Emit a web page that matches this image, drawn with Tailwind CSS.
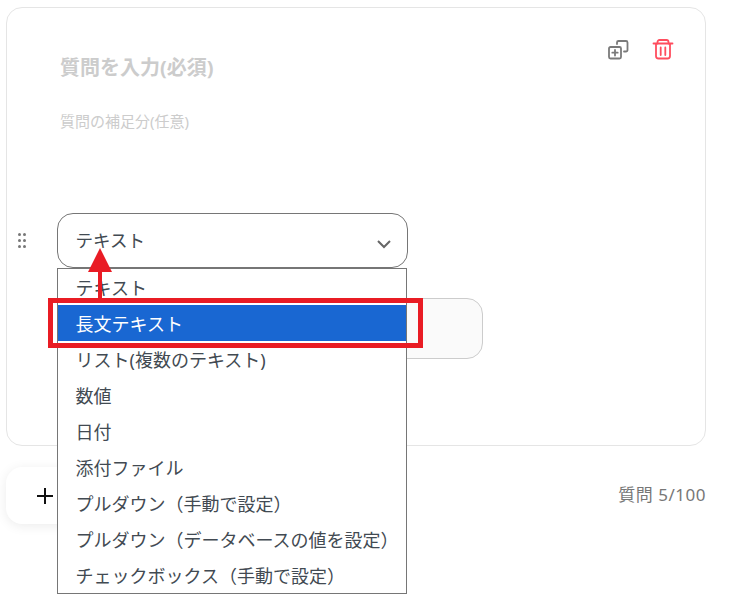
<!DOCTYPE html>
<html lang="ja">
<head>
    <meta charset="UTF-8">
    <title>質問フォーム</title>
    <script src="https://cdn.jsdelivr.net/npm/@tailwindcss/browser@4"></script>
</head>
<body class="relative h-[597px] overflow-hidden bg-white font-['Noto_Sans','Noto_Sans_CJK_JP',sans-serif]">
    <div class="pl-[6px] pt-[7px] w-[706px]">
        <!-- Question card -->
        <div class="relative h-[439px] rounded-2xl border border-[#e5e5e5] bg-white pl-[53px] pt-[45px]">
            <div class="absolute right-[31px] top-[31px] flex items-start gap-[23px]">
                <svg class="w-[22px] h-[22px]" viewBox="0 0 22 22" fill="none" stroke="#7a7a7a" stroke-width="1.800" stroke-linecap="round" stroke-linejoin="round">
                    <rect x="2" y="8" width="12" height="11.500" rx="1.500"/>
                    <path d="M10 5V3.500A1.500 1.500 0 0 1 11.500 2H19a1.500 1.500 0 0 1 1.500 1.500V11a1.500 1.500 0 0 1-1.500 1.500H17"/>
                    <path d="M8 11v5.500M5.300 13.700h5.400"/>
                </svg>
                <svg class="w-[22px] h-[22px]" viewBox="0 0 22 22" fill="none" stroke="#ff4d5e" stroke-width="1.800" stroke-linecap="round" stroke-linejoin="round">
                    <path d="M1.500 4.500h19"/>
                    <path d="M5.500 4.500V3a2 2 0 0 1 2-2h7a2 2 0 0 1 2 2v1.500"/>
                    <path d="M4 5v12a2.500 2.500 0 0 0 2.500 2.500h9A2.500 2.500 0 0 0 18 17V5"/>
                    <path d="M8.700 8.500V16M13.300 8.500V16"/>
                </svg>
            </div>
            <h2 class="text-[20px] leading-[30px] font-bold text-[#cccccc]">質問を入力(必須)</h2>
            <p class="mt-[27px] text-[15px] leading-[22px] text-[#cccccc]">質問の補足分(任意)</p>

            <!-- Type select row -->
            <div class="relative mt-[81px] -ml-[3px] w-[351px]">
                <div class="absolute -left-[39px] top-[20px] grid grid-cols-2 gap-x-[2px] gap-y-[3px]">
                    <span class="w-[3px] h-[3px] rounded-full bg-[#777777]"></span>
                    <span class="w-[3px] h-[3px] rounded-full bg-[#777777]"></span>
                    <span class="w-[3px] h-[3px] rounded-full bg-[#777777]"></span>
                    <span class="w-[3px] h-[3px] rounded-full bg-[#777777]"></span>
                    <span class="w-[3px] h-[3px] rounded-full bg-[#777777]"></span>
                    <span class="w-[3px] h-[3px] rounded-full bg-[#777777]"></span>
                </div>
                <div class="flex h-[55px] items-center justify-between rounded-2xl border border-[#767676] bg-white pl-[17.5px] pr-[15px]">
                    <span class="text-[17.5px] text-[#424a52]">テキスト</span>
                    <svg class="mt-[7px] w-[16px] h-[10px]" viewBox="0 0 16 10" fill="none" stroke="#666666" stroke-width="2"><path d="M2 2l6 6 6-6"/></svg>
                </div>

                <!-- Disabled input behind the menu -->
                <div class="mt-[30px] h-[61px] w-[426px] rounded-2xl border border-[#cccccc] bg-[#fafafa]"></div>

                <!-- Open dropdown -->
                <ul class="absolute left-0 top-[55px] z-10 w-[350px] border border-[#767676] bg-white text-[18px] leading-[38px] text-[#424a52]">
                    <li class="h-[36px] pl-[17.5px]">テキスト</li>
                    <li class="h-[36px] pl-[17.5px] bg-[#1967d2] text-white">長文テキスト</li>
                    <li class="h-[36px] pl-[17.5px]">リスト(複数のテキスト)</li>
                    <li class="h-[36px] pl-[17.5px]">数値</li>
                    <li class="h-[36px] pl-[17.5px]">日付</li>
                    <li class="h-[36px] pl-[17.5px]">添付ファイル</li>
                    <li class="h-[36px] pl-[17.5px]">プルダウン（手動で設定）</li>
                    <li class="h-[36px] pl-[17.5px]">プルダウン（データベースの値を設定）</li>
                    <li class="h-[36px] pl-[17.5px]">チェックボックス（手動で設定）</li>
                </ul>
            </div>
        </div>

        <!-- Footer row -->
        <div class="mt-[21px] flex items-center justify-between">
            <div class="flex h-[57px] w-[200px] items-center rounded-2xl bg-white pl-[29px] shadow-[0_2px_12px_rgba(0,0,0,0.08)]">
                <svg class="w-[20px] h-[20px]" viewBox="0 0 20 20" fill="none" stroke="#111111" stroke-width="2"><path d="M2 10h16M10 2v16"/></svg>
            </div>
            <span class="-mt-[2px] text-[17px] tracking-[0.5px] text-[#777777]">質問 5/100</span>
        </div>
    </div>

    <!-- Annotation: red frame and arrow -->
    <div class="absolute left-[48px] top-[298px] z-20 h-[50px] w-[375px] border-[5px] border-[#e91c24]"></div>
    <svg class="absolute left-[86px] top-[247px] z-20 w-[28px] h-[52px]" viewBox="0 0 28 52" fill="#e91c24">
        <path d="M14 1L26 25H16V52H12V25H2z"/>
    </svg>
</body>
</html>
